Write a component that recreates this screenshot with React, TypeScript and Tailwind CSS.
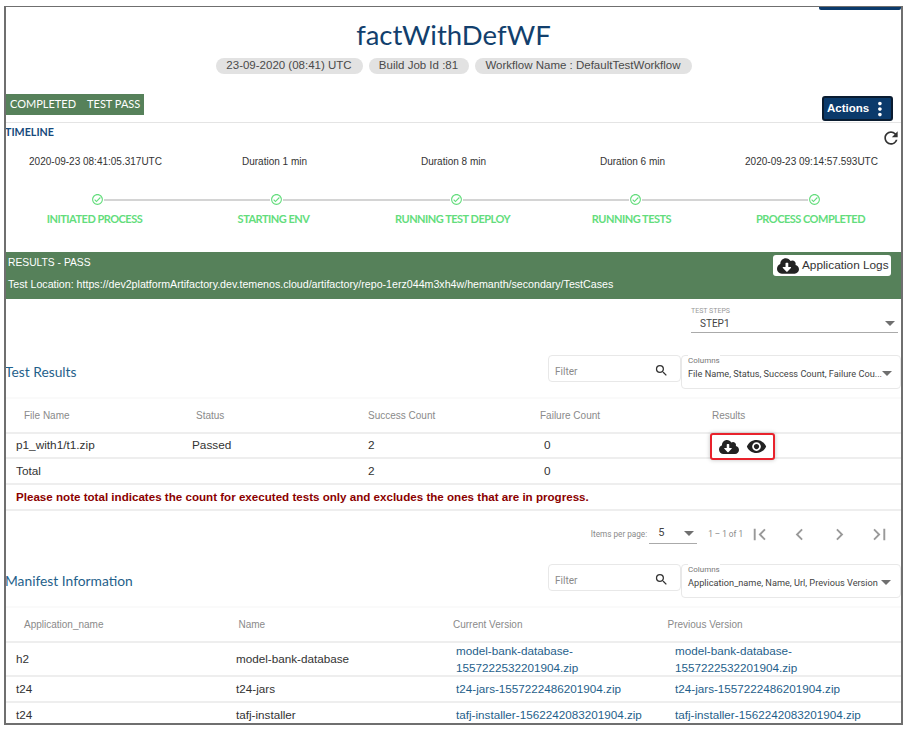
import { FaCloudDownloadAlt } from "react-icons/fa"
import {
  MdChevronLeft,
  MdChevronRight,
  MdFirstPage,
  MdLastPage,
  MdMoreVert,
  MdOutlineCheckCircle,
  MdRefresh,
  MdSearch,
  MdVisibility,
} from "react-icons/md"

const arial = "font-['Liberation_Sans',Arial,sans-serif]"
const lato = "font-['Lato',sans-serif]"
const roboto = "font-['Roboto',sans-serif]"

const times = [
  "2020-09-23 08:41:05.317UTC",
  "Duration 1 min",
  "Duration 8 min",
  "Duration 6 min",
  "2020-09-23 09:14:57.593UTC",
]

const steps = [
  "INITIATED PROCESS",
  "STARTING ENV",
  "RUNNING TEST DEPLOY",
  "RUNNING TESTS",
  "PROCESS COMPLETED",
]

const manifest = [
  { app: "t24", name: "t24-jars", file: "t24-jars-1557222486201904.zip", height: "h-[26px]" },
  { app: "t24", name: "tafj-installer", file: "tafj-installer-1562242083201904.zip", height: "h-[26px]" },
]

function Caret() {
  return <span className="h-0 w-0 shrink-0 border-x-[5px] border-t-[5px] border-x-transparent border-t-[#6f6f6f]" />
}

function Pill({ width, children }: { width: string; children: string }) {
  return (
    <span className={`${width} flex h-[16px] items-center justify-center whitespace-nowrap rounded-full bg-[#e2e2e2] text-[11.5px] text-[#4a4a4a]`}>
      {children}
    </span>
  )
}

function FilterBox() {
  return (
    <div className="flex h-[27px] w-[133px] items-center justify-between rounded-[4px] border border-[#e8e8e8] pl-[6px] pr-[11px] pt-[5px]">
      <span className={`${roboto} text-[10px] text-[#8a8a8a]`}>Filter</span>
      <MdSearch className="-mt-[2px] text-[15px] text-[#333]" />
    </div>
  )
}

function ColumnsBox({ children }: { children: string }) {
  return (
    <div className="relative flex h-[34px] w-[220px] items-center justify-between rounded-[4px] border border-[#e8e8e8] pl-[6px] pr-[9px] pt-[3px]">
      <span className={`${roboto} absolute left-[6px] top-[-1px] bg-white text-[8px] text-[#777]`}>Columns</span>
      <span className={`${roboto} whitespace-nowrap text-[9.2px] text-[#444]`}>{children}</span>
      <Caret />
    </div>
  )
}

function Heading({ children }: { children: string }) {
  return <h2 className={`${lato} -ml-px text-[13.8px] leading-[20px] text-[#1f5f8b]`}>{children}</h2>
}

export default function App() {
  return (
    <div className={`${arial} h-[730px] w-[911px] overflow-hidden bg-white pl-[4px] pt-[6px]`}>
      <div className="relative h-[719px] w-[899px] overflow-hidden border-x-2 border-b-2 border-t border-[#6f6f6f]">
        {/* Cut off button at the top edge */}
        <div className="absolute right-0 top-0 h-[3px] w-[82px] rounded-b-[2px] bg-[#0b3a6b]" />

        {/* Header */}
        <div className="flex h-[87px] flex-col items-center pt-[10px]">
          <h1 className={`${lato} text-[27.5px] leading-[36px] text-[#123f6d]`}>factWithDefWF</h1>
          <div className="mt-[5px] flex gap-[6px]">
            <Pill width="w-[147px]">23-09-2020 (08:41) UTC</Pill>
            <Pill width="w-[100px]">Build Job Id :81</Pill>
            <Pill width="w-[217px]">Workflow Name : DefaultTestWorkflow</Pill>
          </div>
        </div>

        {/* Status row */}
        <div className="flex h-[29px] items-start justify-between border-b border-[#e4e4e4] pr-[8px]">
          <div className={`${lato} flex h-[21px] w-[138px] items-center gap-[11px] whitespace-nowrap bg-[#56815a] px-[4px] text-[11px] text-white`}>
            <span>COMPLETED</span>
            <span>TEST PASS</span>
          </div>
          <div className="mt-[2px] flex h-[25px] w-[71px] items-center justify-between rounded-[3px] border-2 border-[#0a1c30] bg-[#0b3a6b] pl-[3px] text-[11.5px] font-bold text-white">
            <span>Actions</span>
            <MdMoreVert className="text-[22px]" />
          </div>
        </div>

        {/* Timeline */}
        <div className="flex h-[129px] flex-col">
          <div className="flex h-[32px] items-start justify-between pt-[2px]">
            <span className={`${lato} -ml-px text-[10.7px] font-bold leading-[14px] text-[#174a7c]`}>TIMELINE</span>
            <MdRefresh className="mt-[3px] text-[20px] text-[#333]" />
          </div>
          <div className="grid h-[14px] w-[895px] grid-cols-5 text-center text-[10px] leading-[14px] text-[#333]">
            {times.map((time, i) => (
              <span key={i}>{time}</span>
            ))}
          </div>
          <div className="mt-[24px] flex items-center pl-[85px] pr-[80px] text-[#63dd7c]">
            {steps.map((step, i) => (
              <div key={step} className={i < 4 ? "flex flex-1 items-center" : "flex items-center"}>
                <MdOutlineCheckCircle className="text-[13px]" />
                {i < 4 && <span className="h-[2px] flex-1 bg-[#d4d4d4]" />}
              </div>
            ))}
          </div>
          <div className={`${lato} -ml-px mt-[6px] grid w-[895px] grid-cols-5 text-center text-[11px] font-bold leading-[14px] tracking-[-0.5px] text-[#63dd7c]`}>
            {steps.map(step => (
              <span key={step}>{step}</span>
            ))}
          </div>
        </div>

        {/* Results band */}
        <div className="flex h-[47px] justify-between bg-[#56815a] pl-[2px] pr-[10px] text-white">
          <div className="pt-[4px]">
            <div className="text-[10.3px] leading-[14px]">RESULTS - PASS</div>
            <div className="mt-[8px] text-[10.65px] leading-[13px]">
              Test Location: https://dev2platformArtifactory.dev.temenos.cloud/artifactory/repo-1erz044m3xh4w/hemanth/secondary/TestCases
            </div>
          </div>
          <div className="mt-[3px] flex h-[21px] w-[118px] items-center gap-[3px] rounded-[3px] bg-white pl-[4px] text-[11.8px] text-[#333]">
            <FaCloudDownloadAlt className="text-[22px] text-[#222]" />
            <span className="whitespace-nowrap">Application Logs</span>
          </div>
        </div>

        {/* Test steps select */}
        <div className="flex h-[51px] justify-end pr-[3px] pt-[8px]">
          <div className={`${roboto} h-[26px] w-[207px] border-b border-[#aaa]`}>
            <div className="text-[7px] leading-[8px] text-[#999]">TEST STEPS</div>
            <div className="mt-[2px] flex items-center justify-between pl-[9px] pr-[3px] text-[10px] leading-[13px] text-[#444]">
              <span>STEP1</span>
              <Caret />
            </div>
          </div>
        </div>

        {/* Test results */}
        <div className="flex h-[47px] items-start justify-between pt-[5px]">
          <div className="pt-[7px]">
            <Heading>Test Results</Heading>
          </div>
          <div className="flex">
            <FilterBox />
            <ColumnsBox>{"File Name, Status, Success Count, Failure Cou..."}</ColumnsBox>
          </div>
        </div>
        <div className="grid h-[37px] grid-cols-[172px_172px_172px_172px_1fr] items-center border-y-2 border-b-[#eeeeee] border-t-[#fafafa] pl-[18px] text-[10px] text-[#8a8a8a]">
          <span>File Name</span>
          <span>Status</span>
          <span>Success Count</span>
          <span>Failure Count</span>
          <span>Results</span>
        </div>
        <div className="grid h-[25px] grid-cols-[176px_176px_176px_176px_1fr] items-center border-b-2 border-[#eeeeee] pl-[10px] text-[11.8px] text-[#333]">
          <span>p1_with1/t1.zip</span>
          <span>Passed</span>
          <span>2</span>
          <span>0</span>
          <div className="-mb-[3px] -ml-[10px] -mt-[1px] flex h-[27px] w-[65px] items-center justify-center gap-[7px] rounded-[3px] border-2 border-[#e8222c] bg-white shadow-[0_0_4px_rgba(0,0,0,0.25)]">
            <FaCloudDownloadAlt className="text-[20px] text-[#222]" />
            <MdVisibility className="text-[21px] text-[#222]" />
          </div>
        </div>
        <div className="grid h-[26px] grid-cols-[176px_176px_176px_176px_1fr] items-center border-b-2 border-[#eeeeee] pl-[10px] pt-[1px] text-[11.8px] text-[#333]">
          <span>Total</span>
          <span />
          <span>2</span>
          <span>0</span>
        </div>
        <div className="flex h-[26px] items-center border-b-2 border-[#eeeeee] pl-[10px] text-[11.6px] font-bold text-[#8b0000]">
          Please note total indicates the count for executed tests only and excludes the ones that are in progress.
        </div>

        {/* Pagination */}
        <div className={`${roboto} flex h-[44px] items-center justify-end pr-[10px] pt-[2px] text-[8.2px] text-[#8a8a8a]`}>
          <span>Items per page:</span>
          <div className="ml-[2px] flex h-[20px] w-[48px] items-center justify-between border-b border-[#aaa] pl-[9px] pr-[3px] text-[11px] text-[#444]">
            <span>5</span>
            <Caret />
          </div>
          <span className="ml-[11px]">1 – 1 of 1</span>
          <MdFirstPage className="ml-[5px] text-[23px] text-[#999]" />
          <MdChevronLeft className="ml-[17px] text-[23px] text-[#999]" />
          <MdChevronRight className="ml-[17px] text-[23px] text-[#999]" />
          <MdLastPage className="ml-[17px] text-[23px] text-[#999]" />
        </div>

        {/* Manifest */}
        <div className="flex h-[51px] items-start justify-between pt-[9px]">
          <div className="pt-[7px]">
            <Heading>Manifest Information</Heading>
          </div>
          <div className="flex">
            <FilterBox />
            <ColumnsBox>{"Application_name, Name, Url, Previous Version"}</ColumnsBox>
          </div>
        </div>
        <div className="grid h-[37px] grid-cols-[214.5px_214.5px_214.5px_1fr] items-center border-y-2 border-b-[#eeeeee] border-t-[#fafafa] pl-[18px] text-[10px] text-[#8a8a8a]">
          <span>Application_name</span>
          <span>Name</span>
          <span>Current Version</span>
          <span>Previous Version</span>
        </div>
        <div className="grid h-[34px] grid-cols-[220px_220px_219px_1fr] items-center border-b-2 border-[#eeeeee] pb-[1px] pl-[10px] text-[11.7px] text-[#333]">
          <span>h2</span>
          <span>model-bank-database</span>
          <span className="-my-[2px] leading-[17px] text-[#1f5f8b]">model-bank-database-<br />1557222532201904.zip</span>
          <span className="-my-[2px] leading-[17px] text-[#1f5f8b]">model-bank-database-<br />1557222532201904.zip</span>
        </div>
        {manifest.map(row => (
          <div
            key={row.name}
            className={`${row.height} grid grid-cols-[220px_220px_219px_1fr] items-center border-b-2 border-[#eeeeee] pl-[10px] text-[11.7px] text-[#333]`}
          >
            <span>{row.app}</span>
            <span>{row.name}</span>
            <span className="text-[#1f5f8b]">{row.file}</span>
            <span className="text-[#1f5f8b]">{row.file}</span>
          </div>
        ))}
      </div>
    </div>
  )
}
